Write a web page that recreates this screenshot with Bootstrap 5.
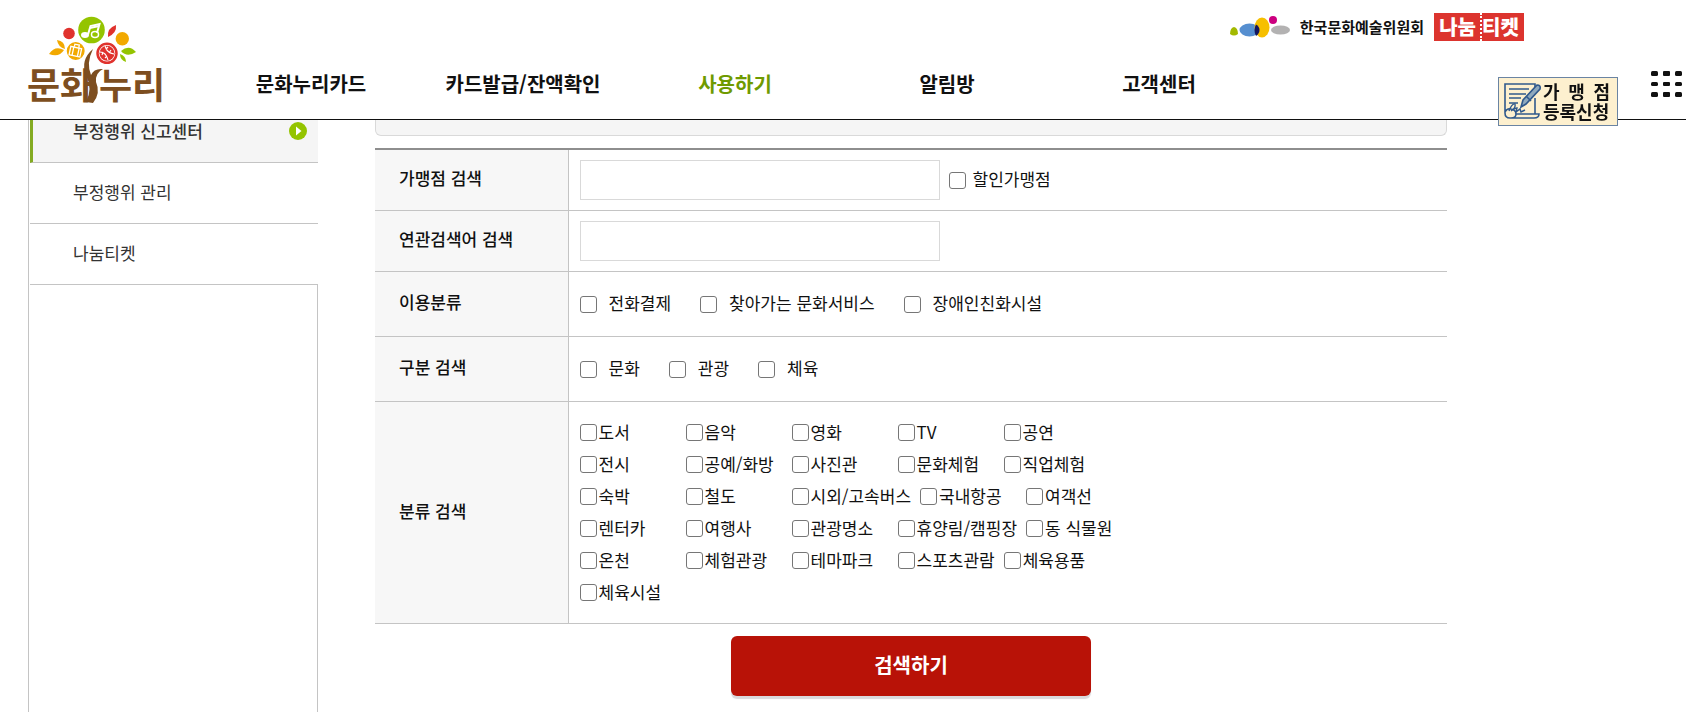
<!DOCTYPE html>
<html lang="ko">
<head>
<meta charset="utf-8">
<meta name="viewport" content="width=device-width, initial-scale=1">
<title>문화누리</title>
<link rel="stylesheet" href="https://cdn.jsdelivr.net/npm/bootstrap@5.3.0/dist/css/bootstrap.min.css">
<style>
  body { font-family: "Noto Sans CJK KR", sans-serif; font-size: 17px; line-height: 24px; color: #111; background: #fff; }
  a { color: inherit; text-decoration: none; }

  .site-header { height: 120px; border-bottom: 1px solid #111; background: #fff; padding-left: 28px; }
  .brand-logo { width: 136px; margin-right: 41px; padding-top: 14px; }
  .brand-logo svg { overflow: visible; }
  .top-links { height: 54px; gap: 10px; padding-right: 162px; }
  .council { font-size: 15px; font-weight: 700; gap: 8px; }
  .ticket { width: 90px; height: 28px; background: #dc342e; color: #fff; font-size: 20px; font-weight: 900; line-height: 28px; }
  .ticket span + span { border-left: 2px dotted #fff; }
  .main-nav { max-width: 1060px; font-size: 20px; font-weight: 700; line-height: 28px; padding-top: 16px; }
  .main-nav .active { color: #6f9a00; }
  .menu-btn { right: 4px; top: 71px; line-height: 0; }
  .join-badge { right: 68px; top: 77px; width: 120px; height: 49px; border: 1px solid #6a84a3; background: #fdf0cf; color: #111; font-size: 18px; font-weight: 700; line-height: 20px; padding: 2px 7px 4px 5px; gap: 2px; }

  .page { max-width: 1447px; min-height: 100vh; padding: 102px 0 0 28px; }
  .side { width: 290px; margin-right: 57px; border-left: 1px solid #c4c4c4; padding-left: 1px; color: #333; }
  .side-link { height: 61px; border-bottom: 1px solid #c4c4c4; padding: 0 11px 2px 43px; }
  .side-link.active { border-left: 3px solid #84ab22; background: #f5f5f5; padding-left: 40px; font-weight: 500; }
  .side-rest { border-right: 1px solid #c4c4c4; }

  .notice-end { height: 34px; border: 1px solid #d9d9d9; border-top: 0; border-radius: 0 0 6px 6px; background: #f5f5f5; margin-bottom: 12px; }
  .search-table { width: 100%; border-top: 2px solid #8e8e8e; }
  .search-table tr { border-bottom: 1px solid #c4c4c4; }
  .search-table th { width: 193px; padding: 0 0 4px 24px; background: #f7f7f7; border-right: 1px solid #c4c4c4; font-weight: 500; vertical-align: middle; }
  .search-table td { padding: 10px 12px 10px 11px; vertical-align: middle; }
  .text-box { width: 360px; height: 40px; border: 1px solid #d9d9d9; }
  .search-table td label { padding-bottom: 2px; }
  .discount { gap: 7px; margin-left: 9px; }
  .option-row { height: 44px; gap: 29px; }
  .option-row label { gap: 12px; }
  .tick { width: 17px; height: 17px; margin: 2px 0 0; flex: none; border: 1px solid #767676; }
  .tick[type=checkbox] { border-radius: 3px; }
  .kinds { min-height: 201px; }
  .search-table .kinds label { min-width: 106px; line-height: 24px; padding: 3px 9px 5px 0; gap: 2px; }
  .search-btn { width: 360px; height: 60px; border: 0; border-radius: 6px; background: #b81207; color: #fff; font-size: 20px; font-weight: 700; box-shadow: 0 3px 1px #d9d9dc; margin-top: 12px; padding-bottom: 4px; }
</style>
</head>
<body>

<header class="site-header fixed-top d-flex">
  <a class="brand-logo" href="#" aria-label="문화누리">
    <svg width="136" height="92" viewBox="28 14 136 92">
      <circle cx="91.500" cy="30" r="13.300" fill="#94c400"/>
      <path d="M88 34.500 90.500 26 99.500 24 97 33" fill="none" stroke="#fff" stroke-width="2"/>
      <path d="m90 28 9-2" stroke="#fff" stroke-width="2"/>
      <ellipse cx="85" cy="35" rx="4" ry="3" fill="#fff"/><ellipse cx="95" cy="34.500" rx="3.500" ry="3" fill="none" stroke="#fff" stroke-width="1.500"/>
      <circle cx="69" cy="33.500" r="5.800" fill="#e0322d"/>
      <path d="M108 37q-1-9 8-12 1 8-8 12Z" fill="#e0322d"/>
      <circle cx="122.300" cy="38.700" r="6.700" fill="#f2a900"/>
      <circle cx="75.700" cy="51" r="8.200" fill="#f2a900" stroke="#f2a900" stroke-width="1.500"/>
      <g fill="none" stroke="#fff" stroke-width="1.300" transform="rotate(12 75.700 51)"><rect x="70" y="47.500" width="11" height="8.500"/><path d="M73 47v9M78.500 47v9M73.500 47v-2.500h4.500V47"/></g>
      <circle cx="107" cy="53.300" r="9.500" fill="#fff" stroke="#e0322d" stroke-width="2.500"/>
      <circle cx="107" cy="53.300" r="7.500" fill="#e0322d"/>
      <path d="M100 52q6 0 8 8M105 46q2 7 9 8M102 55l1-3M105 58l2-2M106 49l2-2M109 53l2-3" fill="none" stroke="#fff" stroke-width="1.100"/>
      <path d="M49 54q6-9 15-4-5 8-15 4Z" fill="#f2a900"/><path d="M57 40q8 1 8 9-7-2-8-9Z" fill="#f2a900"/>
      <path d="M121 51q8-7 15 1-9 6-15-1Z" fill="#94c400"/><path d="M120 54q6 2 6 8-6-2-6-8Z" fill="#94c400"/>
      <g fill="#7d4e20" font-family="Noto Sans CJK KR, sans-serif" font-weight="700" font-size="36"><text x="27" y="99">문화</text><text x="99" y="99">누리</text></g>
      <path d="M93 49Q80 60 86 75 93 89 86 102L93 103Q101 93 96 82 95 73 103 69 94 68 91 75 86 63 93 49Z" fill="#7d4e20"/>
    </svg>
  </a>
  <div class="flex-fill">
    <div class="top-links d-flex align-items-center justify-content-end">
      <a href="#" class="council d-flex align-items-center">
        <svg width="62" height="24" viewBox="0 0 62 24">
          <path d="M0 19q0-6 4-7 4 1 4 7-4 3-8 0Z" fill="#a3b900"/>
          <ellipse cx="19.500" cy="15" rx="10" ry="6.500" fill="#568fd0"/>
          <ellipse cx="32" cy="12.500" rx="7.500" ry="10" fill="#f6bf00"/>
          <path d="M26 9.500a7.500 10 0 0 0 0 11.500Q29.500 18.500 29.500 15T26 9.500Z" fill="#14165e"/>
          <circle cx="43" cy="5" r="4" fill="#cc007f"/><ellipse cx="50.500" cy="15" rx="9.500" ry="4.500" fill="#b3b2b2"/>
        </svg>
        <span>한국문화예술위원회</span>
      </a>
      <a href="#" class="ticket d-flex justify-content-center"><span class="pe-1">나눔</span><span>티켓</span></a>
    </div>
    <nav class="main-nav row g-0 text-center" aria-label="주 메뉴">
      <a class="col" href="#">문화누리카드</a>
      <a class="col" href="#">카드발급/잔액확인</a>
      <a class="col active" href="#">사용하기</a>
      <a class="col" href="#">알림방</a>
      <a class="col" href="#">고객센터</a>
    </nav>
  </div>
  <a href="#" class="join-badge position-absolute d-flex align-items-center">
    <svg class="flex-shrink-0" width="37" height="38" viewBox="0 0 37 38" fill="none" stroke="#30598c" stroke-width="1.600">
      <path d="M1 31V2h30v3M31 16v16M1 31q0 5 5 5h24q5 0 5-4H12q0 4-5 4M1 30q2-4 6-3 5 1 5 5"/>
      <path d="M5 7h20M5 12h17M5 16h12M5 21h9" stroke-width="1.400"/>
      <path d="M17 25l2-7L33 3q4 0 3 4L22 22ZM22 14l5 5" fill="#8fa9bd"/>
      <path d="M5 29q3-8 6-7 1 4-4 7 4-3 6-3l-1 4 4-3 1 3 4-2" stroke-width="1.400"/>
    </svg>
    <span class="flex-fill"><span class="d-flex justify-content-between"><span>가</span><span>맹</span><span>점</span></span><span class="d-block text-nowrap">등록신청</span></span>
  </a>
  <button type="button" class="menu-btn btn p-0 border-0 position-absolute" aria-label="전체 메뉴">
    <svg width="31" height="26" viewBox="0 0 31 26" fill="#111">
      <rect width="7" height="5" rx="1.500"/><rect x="12" width="7" height="5" rx="1"/><rect x="24" width="7" height="5" rx="1.500"/>
      <rect y="11" width="7" height="4" rx="1.500"/><rect x="12" y="11" width="7" height="4" rx="1"/><rect x="24" y="11" width="7" height="4" rx="1.500"/>
      <rect y="21" width="7" height="5" rx="1.500"/><rect x="12" y="21" width="7" height="5" rx="1"/><rect x="24" y="21" width="7" height="5" rx="1.500"/>
    </svg>
  </button>
</header>

<div class="page d-flex">
  <aside class="side d-flex flex-column flex-shrink-0">
    <a class="side-link active d-flex align-items-center justify-content-between" href="#">부정행위 신고센터
      <svg width="18" height="18" viewBox="0 0 18 18"><circle cx="9" cy="9" r="9" fill="#94c400"/><path d="m7 4.500 5.500 4.500L7 13.500Z" fill="#fff"/></svg>
    </a>
    <a class="side-link d-flex align-items-center" href="#">부정행위 관리</a>
    <a class="side-link d-flex align-items-center" href="#">나눔티켓</a>
    <div class="side-rest flex-fill"></div>
  </aside>

  <main class="flex-fill">
    <div class="notice-end"></div>
    <form>
      <table class="search-table">
        <tbody>
          <tr>
            <th scope="row"><label for="shop">가맹점 검색</label></th>
            <td><div class="d-flex align-items-center"><input id="shop" type="text" class="text-box"><label class="discount d-flex align-items-center"><input type="checkbox" class="form-check-input tick">할인가맹점</label></div></td>
          </tr>
          <tr>
            <th scope="row"><label for="related">연관검색어 검색</label></th>
            <td><input id="related" type="text" class="text-box d-block"></td>
          </tr>
          <tr>
            <th scope="row">이용분류</th>
            <td><div class="option-row d-flex align-items-center">
              <label class="d-flex align-items-center"><input type="checkbox" class="form-check-input tick">전화결제</label>
              <label class="d-flex align-items-center"><input type="checkbox" class="form-check-input tick">찾아가는 문화서비스</label>
              <label class="d-flex align-items-center"><input type="checkbox" class="form-check-input tick">장애인친화시설</label>
            </div></td>
          </tr>
          <tr>
            <th scope="row">구분 검색</th>
            <td><div class="option-row d-flex align-items-center">
              <label class="d-flex align-items-center"><input type="checkbox" class="form-check-input tick">문화</label>
              <label class="d-flex align-items-center"><input type="checkbox" class="form-check-input tick">관광</label>
              <label class="d-flex align-items-center"><input type="checkbox" class="form-check-input tick">체육</label>
            </div></td>
          </tr>
          <tr>
            <th scope="row">분류 검색</th>
            <td><div class="kinds d-flex flex-column justify-content-center">
              <div class="d-flex">
                <label class="d-flex align-items-center"><input type="checkbox" class="form-check-input tick">도서</label>
                <label class="d-flex align-items-center"><input type="checkbox" class="form-check-input tick">음악</label>
                <label class="d-flex align-items-center"><input type="checkbox" class="form-check-input tick">영화</label>
                <label class="d-flex align-items-center"><input type="checkbox" class="form-check-input tick">TV</label>
                <label class="d-flex align-items-center"><input type="checkbox" class="form-check-input tick">공연</label>
              </div>
              <div class="d-flex">
                <label class="d-flex align-items-center"><input type="checkbox" class="form-check-input tick">전시</label>
                <label class="d-flex align-items-center"><input type="checkbox" class="form-check-input tick">공예/화방</label>
                <label class="d-flex align-items-center"><input type="checkbox" class="form-check-input tick">사진관</label>
                <label class="d-flex align-items-center"><input type="checkbox" class="form-check-input tick">문화체험</label>
                <label class="d-flex align-items-center"><input type="checkbox" class="form-check-input tick">직업체험</label>
              </div>
              <div class="d-flex">
                <label class="d-flex align-items-center"><input type="checkbox" class="form-check-input tick">숙박</label>
                <label class="d-flex align-items-center"><input type="checkbox" class="form-check-input tick">철도</label>
                <label class="d-flex align-items-center"><input type="checkbox" class="form-check-input tick">시외/고속버스</label>
                <label class="d-flex align-items-center"><input type="checkbox" class="form-check-input tick">국내항공</label>
                <label class="d-flex align-items-center"><input type="checkbox" class="form-check-input tick">여객선</label>
              </div>
              <div class="d-flex">
                <label class="d-flex align-items-center"><input type="checkbox" class="form-check-input tick">렌터카</label>
                <label class="d-flex align-items-center"><input type="checkbox" class="form-check-input tick">여행사</label>
                <label class="d-flex align-items-center"><input type="checkbox" class="form-check-input tick">관광명소</label>
                <label class="d-flex align-items-center"><input type="checkbox" class="form-check-input tick">휴양림/캠핑장</label>
                <label class="d-flex align-items-center"><input type="checkbox" class="form-check-input tick">동 식물원</label>
              </div>
              <div class="d-flex">
                <label class="d-flex align-items-center"><input type="checkbox" class="form-check-input tick">온천</label>
                <label class="d-flex align-items-center"><input type="checkbox" class="form-check-input tick">체험관광</label>
                <label class="d-flex align-items-center"><input type="checkbox" class="form-check-input tick">테마파크</label>
                <label class="d-flex align-items-center"><input type="checkbox" class="form-check-input tick">스포츠관람</label>
                <label class="d-flex align-items-center"><input type="checkbox" class="form-check-input tick">체육용품</label>
              </div>
              <div class="d-flex">
                <label class="d-flex align-items-center"><input type="checkbox" class="form-check-input tick">체육시설</label>
              </div>
            </div></td>
          </tr>
        </tbody>
      </table>
      <button type="submit" class="search-btn d-block mx-auto">검색하기</button>
    </form>
  </main>
</div>

<script src="https://cdn.jsdelivr.net/npm/bootstrap@5.3.0/dist/js/bootstrap.bundle.min.js"></script>
</body>
</html>
